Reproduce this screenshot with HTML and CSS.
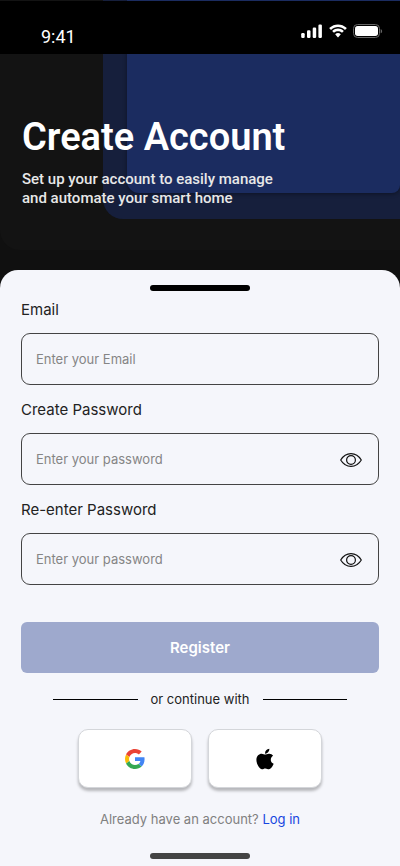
FILE: index.html
```html
<!DOCTYPE html>
<html lang="en">
<head>
<meta charset="utf-8">
<meta name="viewport" content="width=device-width, initial-scale=1">
<title>Create Account</title>
<link rel="stylesheet" href="styles.css">
</head>
<body>
<div class="screen">
  <header class="hero">
    <div class="hero-panel panel-dark"></div>
    <div class="hero-panel panel-navy"></div>
    <div class="hero-panel panel-blue"></div>
    <div class="status-bar">
      <span class="time">9:41</span>
      <div class="status-icons">
        <svg width="22" height="14" viewBox="0 0 22 14" fill="#fff" aria-hidden="true">
          <rect x="0.200" y="9" width="3.500" height="5" rx="1.2"/>
          <rect x="6" y="6.300" width="3.500" height="7.700" rx="1.200"/>
          <rect x="11.700" y="3.500" width="3.500" height="10.500" rx="1.200"/>
          <rect x="17.400" y="0.500" width="3.500" height="13.500" rx="1.200"/>
        </svg>
        <svg width="18" height="14" viewBox="0 0 18 14" fill="#fff" aria-hidden="true">
          <path d="M9 3c2.500 0 4.900 1 6.700 2.700.1.100.3.100.5 0l1.300-1.300c.2-.2.200-.4 0-.6-4.700-4.500-12.300-4.500-17 0-.2.200-.2.400 0 .6l1.300 1.300c.2.100.4.100.5 0C4.100 4 6.500 3 9 3z"/>
          <path d="M9 7.200c1.400 0 2.700.5 3.700 1.400.2.200.4.200.6 0l1.300-1.300c.2-.2.200-.4 0-.6-3.200-3-8-3-11.200 0-.2.200-.2.400 0 .6l1.300 1.300c.2.200.4.200.6 0C6.300 7.700 7.600 7.200 9 7.200z"/>
          <path d="M11.600 10c.2.200.2.400 0 .6l-2.300 2.700c-.2.200-.4.200-.6 0l-2.300-2.700c-.2-.2-.2-.4 0-.6 1.500-1.200 3.700-1.200 5.200 0z"/>
        </svg>
        <svg width="30" height="14" viewBox="0 0 30 14" aria-hidden="true">
          <rect x="0.500" y="0.500" width="26" height="13" rx="4" fill="none" stroke="#666"/>
          <rect x="2" y="2" width="23" height="10" rx="2.700" fill="#fff"/>
          <path d="M27.700 5v4.300c.9-.3 1.400-1.200 1.400-2.100s-.5-1.800-1.400-2.200z" fill="#666"/>
        </svg>
      </div>
    </div>
    <div class="hero-text">
      <h1>Create Account</h1>
      <p>Set up your account to easily manage<br>and automate your smart home</p>
    </div>
  </header>

  <main class="sheet">
    <div class="handle"></div>
    <form class="form">
      <div class="field">
        <label for="email">Email</label>
        <div class="control">
          <input id="email" type="email" placeholder="Enter your Email">
        </div>
      </div>
      <div class="field">
        <label for="password">Create Password</label>
        <div class="control">
          <input id="password" type="password" placeholder="Enter your password">
          <button class="reveal" type="button" aria-label="Show password">
            <svg width="22" height="16" viewBox="0 0 22 16" fill="none" stroke="#111" stroke-width="1.200" aria-hidden="true">
              <path d="M.7 9C3.200 4.800 6.800 2.600 11 2.600S18.800 4.800 21.300 9C18.800 13.200 15.200 15.400 11 15.400S3.200 13.200.7 9z" stroke-linejoin="round"/>
              <circle cx="11" cy="9" r="4.400"/>
            </svg>
          </button>
        </div>
      </div>
      <div class="field">
        <label for="confirm">Re-enter Password</label>
        <div class="control">
          <input id="confirm" type="password" placeholder="Enter your password">
          <button class="reveal" type="button" aria-label="Show password">
            <svg width="22" height="16" viewBox="0 0 22 16" fill="none" stroke="#111" stroke-width="1.200" aria-hidden="true">
              <path d="M.7 9C3.200 4.800 6.800 2.600 11 2.600S18.800 4.800 21.300 9C18.800 13.200 15.200 15.400 11 15.400S3.200 13.200.7 9z" stroke-linejoin="round"/>
              <circle cx="11" cy="9" r="4.400"/>
            </svg>
          </button>
        </div>
      </div>
      <button class="register" type="submit">Register</button>
    </form>

    <div class="divider"><span>or continue with</span></div>

    <div class="social">
      <button type="button" aria-label="Continue with Google">
        <svg width="20" height="20" viewBox="0 0 48 48" aria-hidden="true">
          <path fill="#EA4335" d="M24 9.500c3.540 0 6.710 1.220 9.210 3.600l6.850-6.850C35.900 2.380 30.470 0 24 0 14.620 0 6.510 5.380 2.560 13.220l7.980 6.190C12.430 13.720 17.740 9.500 24 9.500z"/>
          <path fill="#4285F4" d="M46.980 24.550c0-1.570-.15-3.090-.38-4.550H24v9.020h12.940c-.58 2.960-2.260 5.480-4.780 7.180l7.730 6c4.510-4.180 7.090-10.360 7.090-17.650z"/>
          <path fill="#FBBC05" d="M10.530 28.590c-.48-1.450-.76-2.990-.76-4.590s.27-3.140.76-4.590l-7.980-6.190C.92 16.460 0 20.120 0 24c0 3.880.92 7.540 2.560 10.780l7.970-6.190z"/>
          <path fill="#34A853" d="M24 48c6.480 0 11.930-2.130 15.890-5.810l-7.730-6c-2.150 1.450-4.920 2.300-8.160 2.300-6.260 0-11.570-4.220-13.470-9.910l-7.980 6.190C6.510 42.620 14.620 48 24 48z"/>
        </svg>
      </button>
      <button type="button" aria-label="Continue with Apple">
        <svg width="18" height="22" viewBox="0 0 384 480" aria-hidden="true">
          <path transform="translate(0 -16)" d="M318.700 268.700c-.2-36.700 16.400-64.400 50-84.800-18.800-26.900-47.200-41.700-84.700-44.600-35.500-2.800-74.300 20.700-88.500 20.700-15 0-49.400-19.700-76.400-19.700C63.300 141.200 4 184.800 4 273.500q0 39.300 14.400 81.200c12.800 36.700 59 126.700 107.200 125.200 25.200-.6 43-17.900 75.800-17.900 31.800 0 48.300 17.900 76.400 17.900 48.600-.7 90.400-82.500 102.600-119.300-65.200-30.700-61.700-90-61.700-91.900zm-56.600-164.200c27.300-32.400 24.800-61.900 24-72.500-24.100 1.400-52 16.400-67.900 34.900-17.500 19.800-27.800 44.300-25.600 71.900 26.100 2 49.900-11.400 69.500-34.300z"/>
        </svg>
      </button>
    </div>

    <p class="login">Already have an account? <a href="#">Log in</a></p>
    <div class="handle home"></div>
  </main>
</div>
</body>
</html>
```
FILE: styles.css
```css
* {
  box-sizing: border-box;
}

body {
  margin: 0;
  background: #111;
  font-family: Inter, "Liberation Sans", sans-serif;
  color: #222;
}

.screen {
  display: flex;
  flex-direction: column;
  min-height: 100vh;
}

/* Header with layered panels behind the title */
.hero {
  position: relative;
  overflow: hidden;
  padding: 1px 0 82px;
  margin-bottom: -20px;
  background: #101010;
  font-family: Roboto, "Liberation Sans", sans-serif;
}

.hero-panel {
  position: absolute;
  top: 0;
  right: 0;
}

.panel-dark {
  left: 0;
  height: 250px;
  border-radius: 0 0 0 20px;
  background: #131313;
}

.panel-navy {
  left: 103px;
  height: 219px;
  border-radius: 0 0 0 20px;
  background: #161f3c;
}

.panel-blue {
  left: 127px;
  height: 193px;
  border-radius: 0 0 8px 12px;
  background: #1b2c60;
  box-shadow: 0 1px 4px rgba(0, 0, 0, 0.4);
}

.status-bar {
  position: relative;
  display: flex;
  align-items: flex-start;
  justify-content: space-between;
  height: 53px;
  padding: 23px 17px 0 41px;
  background: #000;
}

.time {
  padding-top: 2px;
  font-size: 18px;
  line-height: 22px;
  color: #fff;
}

.status-icons {
  display: flex;
  gap: 6px;
}

.hero-text {
  position: relative;
  padding: 59px 22px 0;
  color: #fff;
}

h1 {
  margin: 0;
  font-size: 38px;
  line-height: 48px;
  font-weight: 600;
}

.hero-text p {
  margin: 9px 0 0;
  font-size: 15px;
  line-height: 19px;
  font-weight: 500;
  color: #e8e8e8;
}

/* Form sheet */
.sheet {
  position: relative;
  flex: 1;
  padding: 15px 21px 7px;
  border-radius: 18px 18px 0 0;
  background: #f5f6fb;
}

.handle {
  width: 100px;
  height: 6px;
  margin: 0 auto;
  border-radius: 3px;
  background: #000;
}

.form {
  display: flex;
  flex-direction: column;
  gap: 15px;
  margin-top: 9px;
}

.field {
  display: flex;
  flex-direction: column;
  gap: 13px;
}

label {
  font-size: 15px;
  line-height: 20px;
}

.control {
  display: flex;
  align-items: center;
  height: 52px;
  padding: 0 14px;
  border: 1px solid #444;
  border-radius: 9px;
}

.control input {
  flex: 1;
  min-width: 0;
  padding: 0;
  border: 0;
  outline: 0;
  background: none;
  font: 13px/20px Inter, "Liberation Sans", sans-serif;
  color: #222;
}

.control input::placeholder {
  color: #858585;
  opacity: 1;
}

.reveal {
  display: flex;
  padding: 2px;
  border: 0;
  background: none;
}

.register {
  height: 51px;
  margin-top: 22px;
  border: 0;
  border-radius: 6px;
  background: #9ea9cd;
  font: 600 15px/20px Inter, "Liberation Sans", sans-serif;
  color: #fff;
}

.divider {
  display: flex;
  align-items: center;
  gap: 13px;
  margin: 16px 32px 0;
  font-size: 13px;
  line-height: 20px;
}

.divider::before,
.divider::after {
  content: "";
  flex: 1;
  height: 1px;
  background: #000;
}

.social {
  display: flex;
  justify-content: center;
  gap: 16px;
  margin-top: 20px;
}

.social button {
  display: flex;
  align-items: center;
  justify-content: center;
  width: 114px;
  height: 59px;
  padding: 0;
  border: 1px solid #d4d6da;
  border-radius: 10px;
  background: #fff;
  box-shadow: 0 3px 3px rgba(0, 0, 0, 0.26);
}

.login {
  margin: 21px 0 24px;
  font-size: 13px;
  line-height: 20px;
  text-align: center;
  color: #808080;
}

.login a {
  color: #1746e0;
  text-decoration: none;
}

.home {
  background: #444;
}
```
